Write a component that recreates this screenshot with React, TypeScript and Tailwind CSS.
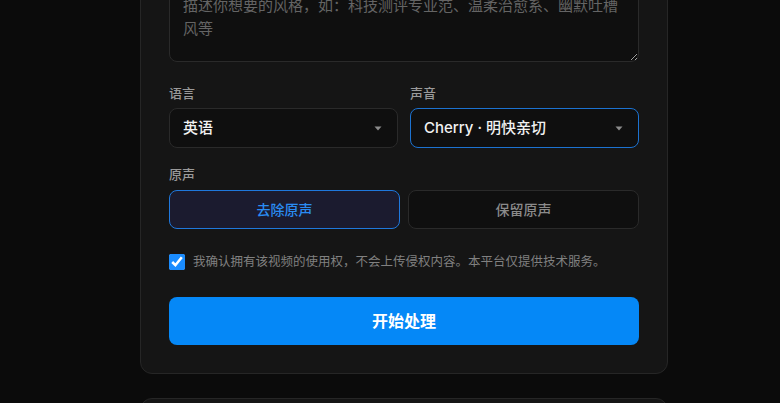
import React, { useState } from 'react';

const font = { fontFamily: 'Inter, "Noto Sans CJK SC", "Noto Sans", sans-serif' };

function Caret() {
  return (
    <svg width="8" height="5" viewBox="0 0 8 5" className="shrink-0">
      <path d="M0.5 0.5h7L4 4.5z" fill="#8c8c8c" />
    </svg>
  );
}

function FakeSelect({ value, focused }: { value: string; focused?: boolean }) {
  return (
    <div
      className={`h-10 flex items-center justify-between pl-[13px] pr-[15px] rounded-lg bg-[#0f0f0f] border ${
        focused ? 'border-[#1c72d0]' : 'border-[#2a2a2a]'
      }`}
    >
      <span className="text-[15px] font-medium text-[#f2f2f2]">{value}</span>
      <Caret />
    </div>
  );
}

export default function App() {
  const [keep, setKeep] = useState(false);
  const [agreed, setAgreed] = useState(true);

  return (
    <div className="w-[780px] h-[403px] overflow-hidden bg-[#0b0b0b]" style={font}>
      <div className="ml-[140px] w-[528px] -mt-[47px]">
        {/* Form card */}
        <div className="rounded-xl border border-[#262626] bg-[#151515] px-7 pt-7 pb-7">
          <textarea
            className="block w-full h-[80px] px-[13px] py-3 rounded-lg bg-[#0f0f0f] border border-[#2a2a2a] text-[15px] leading-normal text-[#e5e5e5] placeholder:text-[#646464] outline-none resize-y [color-scheme:dark]"
            placeholder="描述你想要的风格，如：科技测评专业范、温柔治愈系、幽默吐槽风等"
          />

          <div className="mt-[22px] grid grid-cols-2 gap-3">
            <div>
              <div className="text-[13px] leading-[18px] font-medium text-[#9a9a9a] mb-1.5">语言</div>
              <FakeSelect value="英语" />
            </div>
            <div>
              <div className="text-[13px] leading-[18px] font-medium text-[#9a9a9a] mb-1.5">声音</div>
              <FakeSelect value="Cherry · 明快亲切" focused />
            </div>
          </div>

          <div className="mt-[17px] text-[13px] leading-[18px] font-medium text-[#9a9a9a] mb-[7px]">原声</div>
          <div className="grid grid-cols-2 gap-2">
            <button
              onClick={() => setKeep(false)}
              className={`h-[39px] rounded-lg border text-[14px] font-medium ${
                !keep
                  ? 'bg-[#1b1b2f] border-[#1f78dc] text-[#2a8cf3]'
                  : 'bg-[#0f0f0f] border-[#2a2a2a] text-[#8a8a8a]'
              }`}
            >
              去除原声
            </button>
            <button
              onClick={() => setKeep(true)}
              className={`h-[39px] rounded-lg border text-[14px] font-medium ${
                keep
                  ? 'bg-[#1b1b2f] border-[#1f78dc] text-[#2a8cf3]'
                  : 'bg-[#0f0f0f] border-[#2a2a2a] text-[#8a8a8a]'
              }`}
            >
              保留原声
            </button>
          </div>

          <label className="mt-6 flex items-center gap-2 h-[18px]">
            <input
              type="checkbox"
              checked={agreed}
              onChange={(e) => setAgreed(e.target.checked)}
              className="w-4 h-4 m-0 accent-[#1a8cff]"
            />
            <span className="text-[12.5px] text-[#808080]">
              我确认拥有该视频的使用权，不会上传侵权内容。本平台仅提供技术服务。
            </span>
          </label>

          <button className="mt-[26px] w-full h-12 rounded-lg bg-[#0588f7] text-white text-base font-bold">
            开始处理
          </button>
        </div>

        {/* Next card */}
        <div className="mt-6 h-20 rounded-xl border border-[#262626] bg-[#151515]" />
      </div>
    </div>
  );
}
